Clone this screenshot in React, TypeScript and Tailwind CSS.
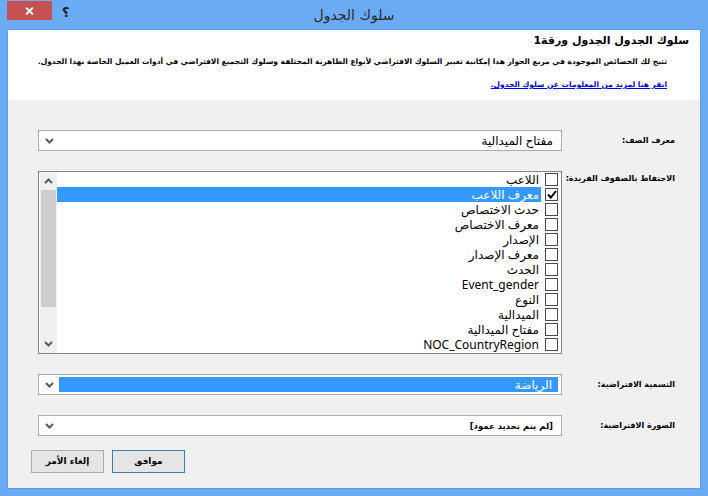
import React from "react";

const items = [
  "اللاعب",
  "معرف اللاعب",
  "حدث الاختصاص",
  "معرف الاختصاص",
  "الإصدار",
  "معرف الإصدار",
  "الحدث",
  "Event_gender",
  "النوع",
  "الميدالية",
  "مفتاح الميدالية",
  "NOC_CountryRegion",
];

function Chevron({ up = false }: { up?: boolean }) {
  return (
    <svg width="9" height="6" viewBox="0 0 9 6">
      <path d={up ? "M1 5L4.5 1.5L8 5" : "M1 1L4.5 4.5L8 1"} stroke="#5a5a5a" strokeWidth="2" fill="none" />
    </svg>
  );
}

function Combo({ text, selected = false, small = false }: { text: string; selected?: boolean; small?: boolean }) {
  return (
    <div className="h-[21px] w-[524px] border border-[#adadad] bg-white flex items-stretch">
      <div className={selected ? "flex-1 flex items-center my-[2px] mr-[3px] bg-[#3399ff] text-white pr-[6px]" : "flex-1 flex items-center pr-[8px] text-black"}>
        <span className={small ? "text-[8.5px] leading-[12px] font-bold font-['DejaVu_Sans',sans-serif]" : "text-[12px] leading-[15px] font-['Noto_Sans','DejaVu_Sans',sans-serif]"}>{text}</span>
      </div>
      <div className="w-[20px] flex items-center justify-center">
        <Chevron />
      </div>
    </div>
  );
}

function Label({ text }: { text: string }) {
  return (
    <div className="w-[113px] text-[8px] leading-[12px] font-bold text-black font-['DejaVu_Sans',sans-serif] whitespace-nowrap">{text}</div>
  );
}

export default function App() {
  return (
    <div dir="rtl" className="w-[708px] h-[496px] bg-[#6aabf3] flex flex-col overflow-hidden">
      {/* title bar */}
      <div dir="ltr" className="h-[29px] grid grid-cols-[1fr_auto_1fr]">
        <div className="flex items-start">
          <div className="ml-[7px] mt-[1px] w-[45px] h-[19px] bg-[#c75050] flex items-center justify-center">
            <svg width="9" height="8" viewBox="0 0 9 8">
              <path d="M1 0.5L8 7.5M8 0.5L1 7.5" stroke="white" strokeWidth="1.8" />
            </svg>
          </div>
          <div className="ml-[10px] mt-[3px] text-[13px] font-bold text-[#1a1a1a] font-['DejaVu_Sans',sans-serif]">؟</div>
        </div>
        <div className="pt-[5px] text-[14px] text-[#2b2b2b] font-['DejaVu_Sans',sans-serif]" dir="rtl">
          سلوك الجدول
        </div>
        <div />
      </div>

      {/* body */}
      <div className="mx-[7px] mb-[7px] flex-1 border border-[#5d9de6] bg-[#f0f0f0] flex flex-col">
        <div className="h-[70px] bg-white flex flex-col pr-[11px] font-['DejaVu_Sans',sans-serif] text-black">
          <div className="mt-[3px] text-[11px] font-bold leading-[16px]">سلوك الجدول الجدول ورقة1</div>
          <div className="mt-[5px] pr-[22px] text-[7.5px] font-bold leading-[16px] whitespace-nowrap">
            تتيح لك الخصائص الموجودة في مربع الحوار هذا إمكانية تغيير السلوك الافتراضي لأنواع الظاهرية المختلفة وسلوك التجميع الافتراضي في أدوات العميل الخاصة بهذا الجدول.
          </div>
          <div className="mt-[7px] pr-[22px] text-[7.5px] font-bold leading-[16px]">
            <span className="text-[#0000ee] underline">انقر هنا لمزيد من المعلومات عن سلوك الجدول.</span>
          </div>
        </div>

        <div className="flex flex-col pr-[25px] pl-[30px] pt-[30px]">
          <div className="flex items-center">
            <Label text="معرف الصف:" />
            <Combo text="مفتاح الميدالية" />
          </div>

          <div className="flex items-start mt-[20px]">
            <div className="pt-[2px]">
              <Label text="الاحتفاظ بالصفوف الفريدة:" />
            </div>
            <div className="h-[183px] w-[524px] border border-[#828790] bg-white flex">
              <div className="flex-1 flex flex-col">
                {items.map((it, i) => {
                  const sel = i === 1;
                  return (
                    <div key={i} className="h-[15px] flex items-center pr-[3px]">
                      <div className="w-[13px] h-[13px] border border-[#4a4a4a] bg-white flex items-center justify-center shrink-0">
                        {sel && (
                          <svg width="10" height="9" viewBox="0 0 10 9">
                            <path d="M1 4.5L3.8 7.5L9 1" stroke="#000" strokeWidth="2" fill="none" />
                          </svg>
                        )}
                      </div>
                      <div className={"flex-1 h-[15px] mr-[4px] flex items-center pr-[2px] text-[12px] leading-[15px] font-['Noto_Sans','DejaVu_Sans',sans-serif] whitespace-nowrap " + (sel ? "bg-[#3399ff] text-white" : "text-black")}>
                        {it}
                      </div>
                    </div>
                  );
                })}
              </div>
              <div className="w-[17px] ml-[1px] bg-[#f0f0f0] flex flex-col items-center">
                <div className="h-[18px] flex items-center justify-center"><Chevron up /></div>
                <div className="w-[15px] h-[117px] bg-[#cdcdcd]" />
                <div className="flex-1" />
                <div className="h-[18px] flex items-center justify-center"><Chevron /></div>
              </div>
            </div>
          </div>

          <div className="flex items-center mt-[20px]">
            <Label text="التسمية الافتراضية:" />
            <Combo text="الرياضة" selected />
          </div>

          <div className="flex items-center mt-[20px]">
            <Label text="الصورة الافتراضية:" />
            <Combo text="[لم يتم تحديد عمود]" small />
          </div>
        </div>

        <div className="flex gap-[8px] pr-[24px] mt-[14px] justify-end" dir="ltr">
          <div className="ml-[23px] w-[73px] h-[23px] border border-[#acacac] bg-[#e5e5e5] flex items-center justify-center text-[9px] font-bold font-['DejaVu_Sans',sans-serif]" dir="rtl">إلغاء الأمر</div>
          <div className="w-[73px] h-[23px] border border-[#3c7fb1] bg-[#e5e5e5] flex items-center justify-center text-[9px] font-bold font-['DejaVu_Sans',sans-serif]" dir="rtl">موافق</div>
          <div className="flex-1" />
        </div>
      </div>
    </div>
  );
}
